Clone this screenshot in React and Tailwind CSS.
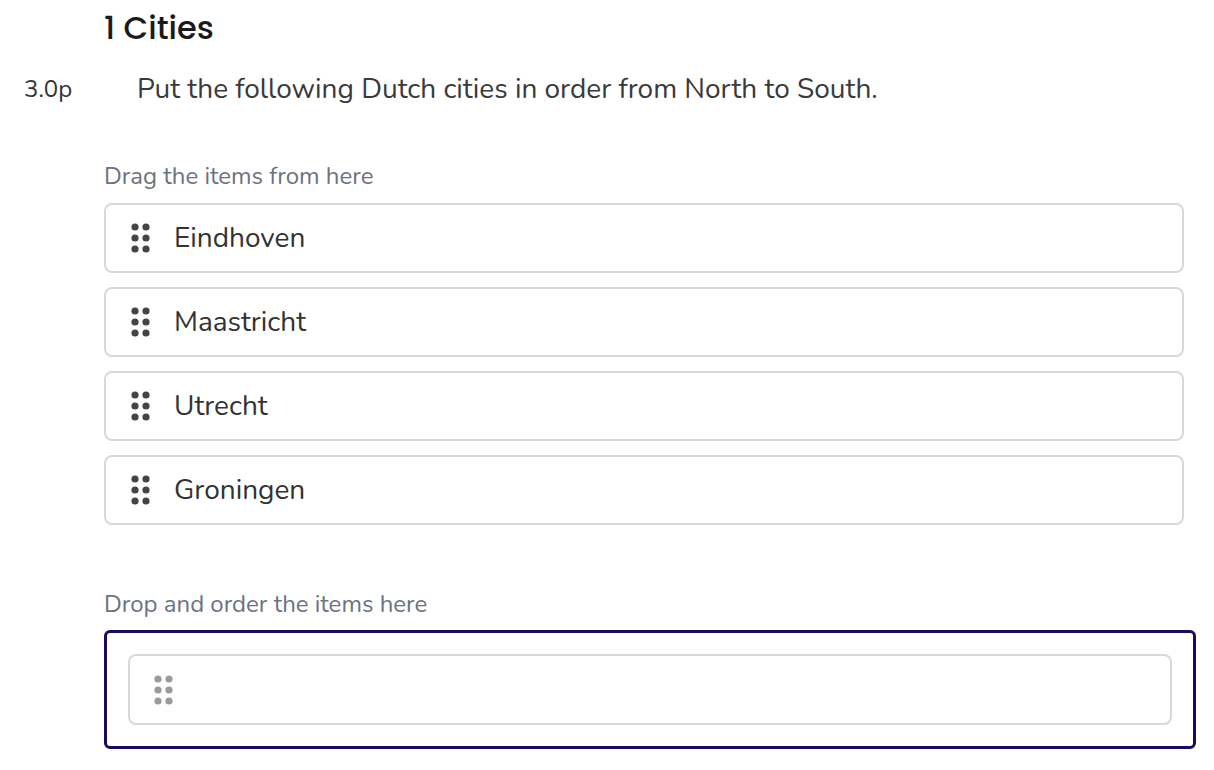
import React from "react";

const body = { fontFamily: '"Nunito", "Lato", "Open Sans", sans-serif' };
const head = { fontFamily: '"Poppins", "Inter", sans-serif' };

const Dots = ({ className = "fill-[#444]" }) => (
  <svg width="20" height="30" viewBox="0 0 20 30" className={className}>
    {[4, 15, 26].map((y) =>
      [4, 15].map((x) => <circle key={`${x}-${y}`} cx={x} cy={y} r="3.6" />)
    )}
  </svg>
);

const Item = ({ label }) => (
  <div className="h-[70px] border-2 border-[#d5d8dc] rounded-lg flex items-center pl-[25px] gap-[23px]">
    <Dots />
    <span className="text-[28px] leading-[32px] text-[#333]">{label}</span>
  </div>
);

export default function App() {
  const cities = ["Eindhoven", "Maastricht", "Utrecht", "Groningen"];
  return (
    <div className="min-h-screen bg-white" style={body}>
      <div className="pl-[104px] pt-[8px]">
        <h1 className="text-[32px] font-medium text-[#1a1a1a] leading-[40px]" style={head}>
          1 Cities
        </h1>
      </div>
      <div className="flex items-center mt-[25px] pl-[24px] h-[32px]">
        <span className="w-[113px] text-[24px] text-[#333]">3.0p</span>
        <p className="text-[28px] leading-[32px] text-[#3a3a3a]">
          Put the following Dutch cities in order from North to South.
        </p>
      </div>

      <div className="pl-[104px] pr-[18px] mt-[57px]">
        <p className="text-[24px] text-[#6b7280] leading-[28px]">Drag the items from here</p>
        <div className="w-[1080px] mt-[13px] flex flex-col gap-[14px]">
          {cities.map((c) => (
            <Item key={c} label={c} />
          ))}
        </div>

        <p className="text-[24px] text-[#6b7280] leading-[28px] mt-[65px]">
          Drop and order the items here
        </p>
        <div className="w-[1092px] mt-[12px] border-[3px] border-[#150d5e] rounded-md p-[21px]">
          <div className="h-[71px] border-2 border-[#d5d8dc] rounded-lg flex items-center pl-[24px]">
            <Dots className="fill-[#9a9a9a]" />
          </div>
        </div>
      </div>
    </div>
  );
}
